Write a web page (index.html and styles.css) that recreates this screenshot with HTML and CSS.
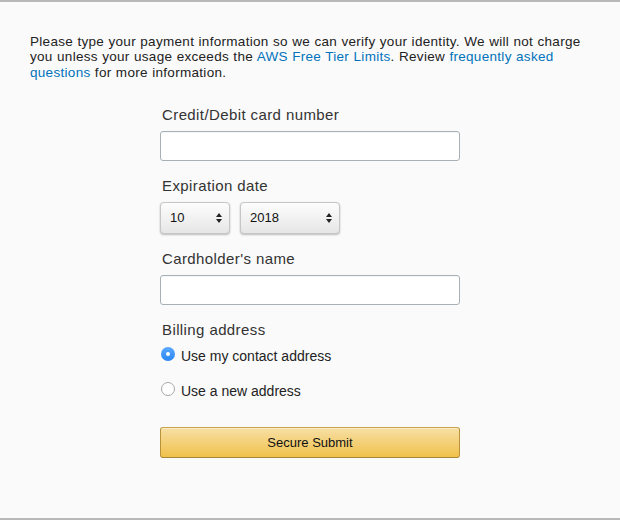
FILE: index.html
```html
<!DOCTYPE html>
<html>
<head>
<meta charset="utf-8">
<link rel="stylesheet" href="styles.css">
</head>
<body>
<div class="page">
  <p class="intro">Please type your payment information so we can verify your identity. We will not charge you unless your usage exceeds the <a href="#">AWS Free Tier Limits</a>. Review <a href="#">frequently asked questions</a> for more information.</p>
  <form class="form">
    <div class="label first">Credit/Debit card number</div>
    <input class="text-input" type="text">
    <div class="label">Expiration date</div>
    <div class="selects">
      <select class="sel month"><option>10</option></select>
      <select class="sel year"><option>2018</option></select>
    </div>
    <div class="label">Cardholder's name</div>
    <input class="text-input" type="text">
    <div class="label">Billing address</div>
    <div class="radio-row first-radio"><span class="radio checked"></span><span class="radio-text">Use my contact address</span></div>
    <div class="radio-row second-radio"><span class="radio"></span><span class="radio-text">Use a new address</span></div>
    <button type="button" class="submit">Secure Submit</button>
  </form>
</div>
</body>
</html>
```
FILE: styles.css
```css
html, body {
  margin: 0;
  padding: 0;
  background: #fafafa;
}
body {
  font-family: "Liberation Sans", Arial, sans-serif;
  color: #222;
}
.page {
  box-sizing: border-box;
  width: 620px;
  height: 520px;
  border-top: 2px solid #b8b8b8;
  border-bottom: 2px solid #b8b8b8;
  background: #fafafa;
  overflow: hidden;
}
.intro {
  margin: 31.5px 30px 0 30px;
  width: 558px;
  font-size: 13.5px;
  letter-spacing: 0.3px;
  word-spacing: 0.3px;
  line-height: 15.6px;
  color: #222;
}
.intro a {
  color: #0073bb;
  text-decoration: none;
}
.form {
  margin: 0 0 0 160px;
  width: 300px;
  display: flex;
  flex-direction: column;
  align-items: stretch;
}
.label {
  font-size: 15px;
  letter-spacing: 0.4px;
  line-height: 18px;
  color: #333;
  margin: 16px 0 7px 2px;
}
.label.first {
  margin-top: 25.5px;
}
.text-input {
  box-sizing: border-box;
  height: 30px;
  width: 300px;
  margin: 0;
  border: 1px solid #a6b1b5;
  border-radius: 3px;
  background: #fff;
  box-shadow: inset 0 1px 0 rgba(0,0,0,0.04);
}
.selects {
  display: flex;
  gap: 10px;
  height: 32px;
}
.sel {
  -webkit-appearance: none;
  appearance: none;
  box-sizing: border-box;
  height: 32px;
  margin: 0;
  padding: 0 0 0 9px;
  border: 1px solid #c6c6c6;
  border-radius: 4px;
  font-family: "Liberation Sans", Arial, sans-serif;
  font-size: 13px;
  color: #111;
  background-color: #efefef;
  background-image: url("data:image/svg+xml,%3Csvg xmlns='http://www.w3.org/2000/svg' width='7' height='11'%3E%3Cpath d='M3.5 0L7 4.5H0z M3.5 11L0 6.5H7z' fill='%23222'/%3E%3C/svg%3E"), linear-gradient(#fdfdfd, #e6e6e6);
  background-repeat: no-repeat, no-repeat;
  background-position: right 7px center, 0 0;
  background-size: 6px 10px, 100% 100%;
  box-shadow: 0 1px 2px rgba(0,0,0,0.25);
}
.month { width: 70px; }
.year { width: 100px; }
.radio-row {
  display: flex;
  align-items: center;
  height: 20px;
  font-size: 14px;
  color: #222;
}
.first-radio { margin-top: 0; }
.second-radio { margin-top: 15px; }
.radio {
  box-sizing: border-box;
  width: 14px;
  height: 14px;
  border-radius: 50%;
  border: 1px solid #a8a8a8;
  background: #fff;
  margin: -3px 6px 0 1px;
  display: flex;
  align-items: center;
  justify-content: center;
}
.radio.checked {
  border: none;
  background: linear-gradient(#5aa9ff, #2a85f2);
}
.radio.checked::after {
  content: "";
  width: 4px;
  height: 4px;
  border-radius: 50%;
  background: #fff;
}
.radio-text {
  line-height: 20px;
}
.submit {
  box-sizing: border-box;
  margin: 26px 0 0 0;
  width: 300px;
  height: 31px;
  border: 1px solid;
  border-color: #c9a24a #b9923a #a88734;
  border-radius: 3px;
  background: linear-gradient(#f7dfa5, #f0c14b);
  font-family: "Liberation Sans", Arial, sans-serif;
  font-size: 13px;
  color: #111;
  padding: 0;
  box-shadow: 0 1px 0 rgba(255,255,255,0.4) inset;
}
```
